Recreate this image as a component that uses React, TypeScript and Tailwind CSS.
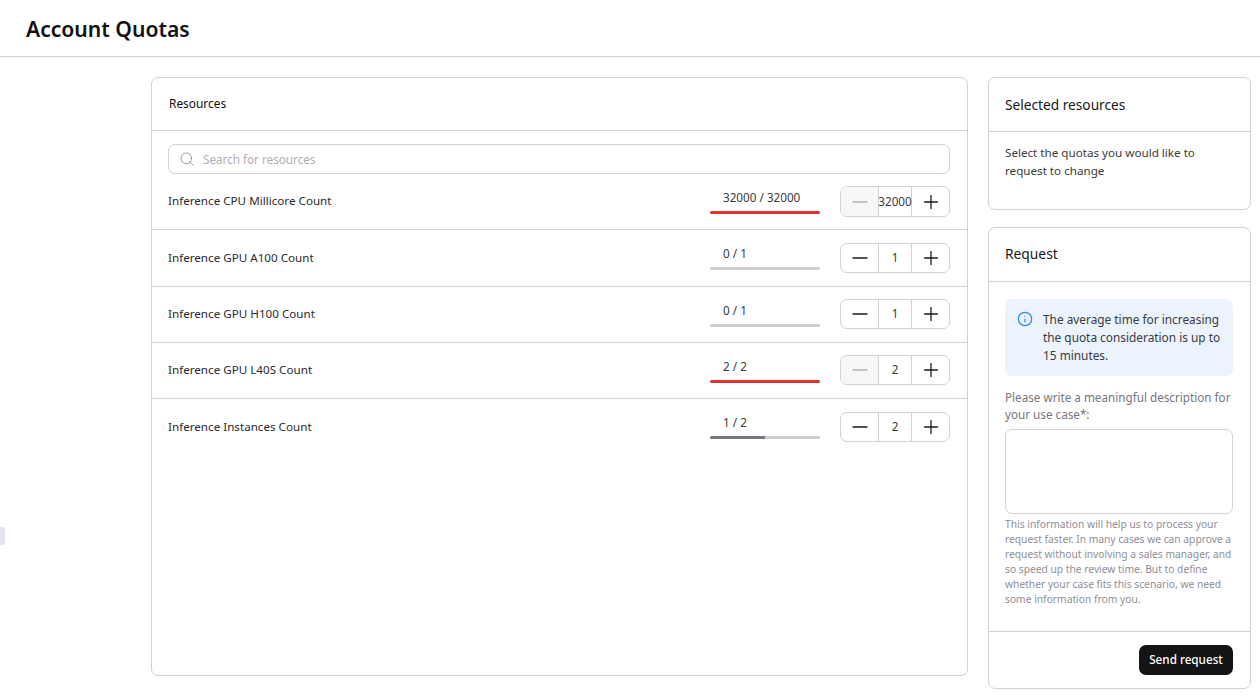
import { Minus, Plus, Search, Info } from "lucide-react";

type Resource = {
  name: string;
  used: number;
  limit: number;
  value: number;
  rowClass: string;
  stepperClass: string;
};

const resources: Resource[] = [
  { name: "Inference CPU Millicore Count", used: 32000, limit: 32000, value: 32000, rowClass: "h-[56px]", stepperClass: "mt-[12px] h-[31px]" },
  { name: "Inference GPU A100 Count", used: 0, limit: 1, value: 1, rowClass: "h-[57px]", stepperClass: "mt-[13px] h-[30px]" },
  { name: "Inference GPU H100 Count", used: 0, limit: 1, value: 1, rowClass: "h-[56px]", stepperClass: "mt-[12px] h-[30px]" },
  { name: "Inference GPU L40S Count", used: 2, limit: 2, value: 2, rowClass: "h-[56px]", stepperClass: "mt-[12px] h-[30px]" },
  { name: "Inference Instances Count", used: 1, limit: 2, value: 2, rowClass: "h-[56px]", stepperClass: "mt-[13px] h-[30px]" },
];

function Usage({ used, limit }: { used: number; limit: number }) {
  const full = used >= limit;
  return (
    <div className="mt-[14px] w-[110px]">
      <div className="pl-[13px] text-[11.7px] leading-[18px] text-[#3a3a40]">
        {used} / {limit}
      </div>
      <div className="mt-[5px] h-[3px] rounded-full bg-[#cfcdd2] overflow-hidden">
        <div
          className={full ? "h-full bg-[#e0322d]" : "h-full bg-[#77757e]"}
          style={{ width: `${(used / limit) * 100}%` }}
        />
      </div>
    </div>
  );
}

function Stepper({ value, atLimit, className }: { value: number; atLimit: boolean; className: string }) {
  return (
    <div className={`flex w-[110px] rounded-[7px] border border-[#d2d1d5] overflow-hidden ${className}`}>
      <div
        className={
          atLimit
            ? "flex w-[37px] shrink-0 items-center justify-center bg-[#f7f7f8] text-[#b4b3ba]"
            : "flex w-[37px] shrink-0 items-center justify-center text-[#18181b]"
        }
      >
        <Minus size={24} strokeWidth={1.3} />
      </div>
      <div className="flex w-[34px] shrink-0 items-center justify-center border-x border-[#d2d1d5] text-[11.7px] text-[#3a3a40]">
        {value}
      </div>
      <div className="flex flex-1 items-center justify-center text-[#18181b]">
        <Plus size={22} strokeWidth={1.4} />
      </div>
    </div>
  );
}

export default function App() {
  return (
    <div className="relative h-[699px] overflow-hidden bg-white font-['Noto_Sans',sans-serif] text-[#18181b]">
      <header className="flex h-[57px] items-center border-b border-[#d2d1d5] pl-[26px] pt-[2px]">
        <h1 className="text-[21.1px] font-semibold leading-[28px] text-[#111114]">Account Quotas</h1>
      </header>

      {/* small tab at the page edge */}
      <div className="absolute left-0 top-[527px] h-[18px] w-[5px] rounded-r-[2px] bg-[#e6e5ee]" />

      <main className="flex gap-[20px] pl-[151px] pr-[9px] pt-[20px]">
        {/* Resources */}
        <section className="h-[599px] w-[817px] shrink-0 rounded-[7px] border border-[#d2d1d5]">
          <div className="flex h-[53px] items-center border-b border-[#d2d1d5] pl-[17px] text-[11.9px] text-[#111114]">
            Resources
          </div>
          <div className="pl-[16px] pr-[17px] pt-[13px]">
            <div className="flex h-[30px] items-center gap-[8px] rounded-[7px] border border-[#d2d1d5] pl-[10px]">
              <Search size={16} strokeWidth={1.3} className="text-[#8f8e96]" />
              <span className="pt-[1px] text-[11.7px] text-[#b1aeb8]">Search for resources</span>
            </div>
          </div>
          <div>
            {resources.map((r, i) => (
              <div
                key={r.name}
                className={`flex items-start pl-[16px] pr-[17px] ${r.rowClass} ${
                  i < resources.length - 1 ? "border-b border-[#d2d1d5]" : ""
                }`}
              >
                <div className={`flex flex-1 items-center text-[11.65px] text-[#2b2b30] ${r.stepperClass}`}>
                  <span className={i === 0 ? "-mt-[2px]" : ""}>{r.name}</span>
                </div>
                <div className="mr-[20px]">
                  <Usage used={r.used} limit={r.limit} />
                </div>
                <Stepper value={r.value} atLimit={r.used >= r.limit} className={r.stepperClass} />
              </div>
            ))}
          </div>
        </section>

        {/* Right column */}
        <aside className="flex w-[263px] shrink-0 flex-col gap-[17px]">
          <section className="h-[133px] rounded-[7px] border border-[#d2d1d5]">
            <div className="flex h-[54px] items-center border-b border-[#d2d1d5] pl-[16px] pt-[1px] text-[13.7px] text-[#18181b]">
              Selected resources
            </div>
            <p className="px-[16px] pt-[12px] text-[11.65px] leading-[18px] text-[#3a3a40]">
              Select the quotas you would like to request to change
            </p>
          </section>

          <section className="h-[462px] rounded-[7px] border border-[#d2d1d5]">
            <div className="flex h-[54px] items-center border-b border-[#d2d1d5] pl-[16px] text-[13.8px] text-[#18181b]">
              Request
            </div>
            <div className="h-[349px] pl-[16px] pr-[17px] pt-[17px]">
              <div className="flex h-[77px] gap-[10px] rounded-[7px] bg-[#ebf3fd] pl-[12px] pr-[8px] pt-[11px]">
                <Info size={16} strokeWidth={1.8} className="mt-[1px] shrink-0 text-[#2f86ee]" />
                <p className="text-[11.85px] leading-[18px] text-[#3a3a40]">
                  The average time for increasing the quota consideration is up to 15 minutes.
                </p>
              </div>
              <p className="mt-[13px] text-[11.7px] leading-[17px] text-[#77757e]">
                Please write a meaningful description for your use case*:
              </p>
              <textarea
                className="mt-[6px] block h-[85px] w-full resize-none rounded-[7px] border border-[#d2d1d5] bg-white"
                aria-label="Use case"
              />
              <p className="mt-[3px] text-[10.25px] leading-[15px] text-[#8f8e96]">
                This information will help us to process your request faster. In many cases we can approve a request
                without involving a sales manager, and so speed up the review time. But to define whether your case fits
                this scenario, we need some information from you.
              </p>
            </div>
            <div className="flex justify-end border-t border-[#d2d1d5] pr-[17px] pt-[13px]">
              <button className="h-[30px] w-[94px] rounded-[7px] bg-[#141414] text-[11.7px] font-medium text-white">
                Send request
              </button>
            </div>
          </section>
        </aside>
      </main>
    </div>
  );
}
